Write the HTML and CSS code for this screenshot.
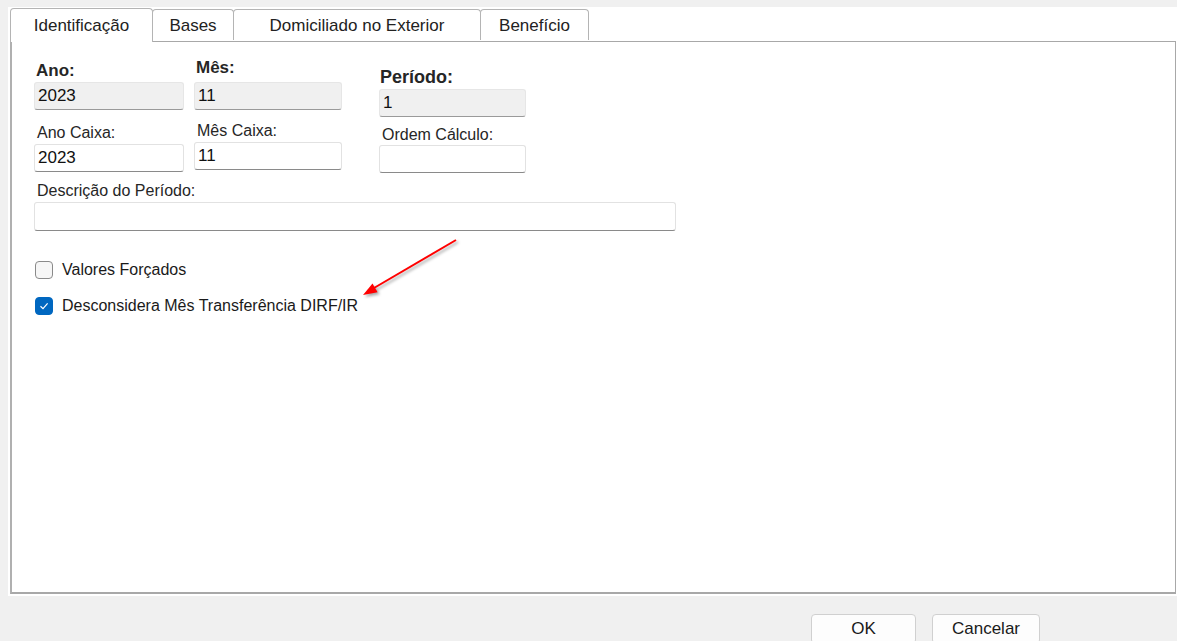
FILE: index.html
```html
<!DOCTYPE html>
<html lang="pt-BR">
<head>
  <meta charset="UTF-8">
  <title>Período</title>
  <link rel="stylesheet" href="styles.css">
</head>
<body>
  <div class="tab-control">
    <div class="tab-strip">
      <div class="tab tab-active tab-ident">Identificação</div>
      <div class="tab tab-bases">Bases</div>
      <div class="tab tab-dom">Domiciliado no Exterior</div>
      <div class="tab tab-benef">Benefício</div>
    </div>
    <div class="tab-page">
      <div class="top-grid">
        <div class="col col-ano">
          <div class="label bold">Ano:</div>
          <div class="box readonly gap-2">2023</div>
          <div class="label next-13">Ano Caixa:</div>
          <div class="box gap-2">2023</div>
        </div>
        <div class="col col-mes">
          <div class="label bold">Mês:</div>
          <div class="box readonly gap-5">11</div>
          <div class="label next-11">Mês Caixa:</div>
          <div class="box gap-1">11</div>
        </div>
        <div class="col col-periodo">
          <div class="label bold big">Período:</div>
          <div class="box readonly gap-3">1</div>
          <div class="label next-8">Ordem Cálculo:</div>
          <div class="box"></div>
        </div>
      </div>

      <div class="desc">
        <div class="label">Descrição do Período:</div>
        <div class="box box-wide"></div>
      </div>

      <div class="check-row first">
        <span class="checkbox"></span>
        <span>Valores Forçados</span>
      </div>
      <div class="check-row">
        <span class="checkbox checked">
          <svg width="12" height="12" viewBox="0 0 12 12"><path d="M2.5 6.3 L5 8.7 L9.6 3.4" fill="none" stroke="#fff" stroke-width="1.2"/></svg>
        </span>
        <span>Desconsidera Mês Transferência DIRF/IR</span>
      </div>

      <svg class="arrow" width="110" height="70" viewBox="0 0 110 70">
        <line x1="101" y1="5" x2="19" y2="53" stroke="#f00" stroke-width="2"/>
        <polygon points="8,60 22.6,57.2 17.5,48.6" fill="#f00"/>
      </svg>
    </div>
  </div>

  <div class="buttons">
    <button class="btn btn-ok">OK</button>
    <button class="btn btn-cancel">Cancelar</button>
  </div>
</body>
</html>
```

FILE: styles.css
```css
html, body {
  margin: 0;
  padding: 0;
  height: 100%;
  overflow: hidden;
}
body {
  background: #f0f0f0;
  font-family: "Liberation Sans", Arial, sans-serif;
  font-size: 16px;
  color: #1a1a1a;
}
.tab-control {
  margin: 7px 0 0 8px;
  padding: 0 1px 2px 2px;
  background: #fff;
  height: 589px;
  box-sizing: border-box;
  display: flex;
  flex-direction: column;
}
.tab-strip {
  display: flex;
  align-items: flex-end;
  height: 34px;
  position: relative;
  z-index: 1;
}
.tab {
  box-sizing: border-box;
  height: 31px;
  border: 1px solid #b4b4b4;
  border-bottom: none;
  border-radius: 4px 4px 0 0;
  background: #fff;
  margin-left: -1px;
  margin-bottom: 1px;
  padding-top: 2px;
  display: flex;
  align-items: center;
  justify-content: center;
  font-size: 17px;
  color: #222;
}
.tab-active {
  height: 34px;
  margin-left: 0;
  margin-bottom: -1px;
  padding-top: 0;
}
.tab-ident { width: 143px; }
.tab-bases { width: 82px; }
.tab-dom { width: 248px; }
.tab-benef { width: 109px; }

.tab-page {
  flex: 1;
  position: relative;
  border: 1px solid #a8a8a8;
  border-bottom: 2px solid #a8a8a8;
  border-left: 2px solid #b0b0b0;
  padding: 15px 0 0 22px;
}

.top-grid {
  display: flex;
  align-items: flex-start;
}
.col {
  display: flex;
  flex-direction: column;
}
.col-ano { width: 150px; margin-top: 4px; }
.col-mes { width: 148px; margin-left: 10px; margin-top: 1px; }
.col-periodo { width: 147px; margin-left: 37px; margin-top: 10px; }

.label {
  line-height: 20px;
  height: 20px;
  padding-left: 3px;
  color: #262626;
  white-space: nowrap;
}
.label.bold {
  font-weight: bold;
  font-size: 17px;
  padding-left: 2px;
}
.label.big { font-size: 18px; padding-left: 1px; }
.next-13 { margin-top: 13px; }
.next-11 { margin-top: 11px; }
.next-8 { margin-top: 8px; }
.gap-1 { margin-top: 1px; }
.gap-2 { margin-top: 1px; }
.gap-3 { margin-top: 2px; }
.gap-5 { margin-top: 4px; }

.box {
  box-sizing: border-box;
  height: 28px;
  line-height: 26px;
  padding-left: 3px;
  font-size: 17px;
  color: #111;
  background: #fff;
  border: 1px solid #e2e2e2;
  border-bottom: 1px solid #8a8a8a;
  border-radius: 3px;
}
.box.readonly {
  background: #f0f0f0;
  border-color: #e6e6e6;
  border-bottom-color: #9a9a9a;
}

.desc { margin-top: 8px; }
.box-wide {
  width: 642px;
  height: 29px;
  margin-top: 1px;
}

.check-row {
  display: flex;
  align-items: center;
  height: 20px;
  margin-top: 16px;
  margin-left: 1px;
  color: #1a1a1a;
}
.check-row.first { margin-top: 29px; }
.checkbox {
  box-sizing: border-box;
  width: 18px;
  height: 18px;
  border: 1px solid #8a8a8a;
  border-radius: 4px;
  background: #f6f6f6;
  margin-right: 9px;
  display: flex;
  align-items: center;
  justify-content: center;
}
.checkbox.checked {
  background: #0067c0;
  border-color: #0067c0;
}

.arrow {
  position: absolute;
  left: 343px;
  top: 193px;
  filter: drop-shadow(2px 2px 1.5px rgba(0, 0, 0, 0.35));
}

.buttons {
  display: flex;
  justify-content: flex-end;
  gap: 16px;
  padding: 18px 137px 0 0;
}
.btn {
  height: 30px;
  border: 1px solid #d0d0d0;
  border-radius: 4px;
  background: #fdfdfd;
  font-family: "Liberation Sans", Arial, sans-serif;
  font-size: 17px;
  color: #1a1a1a;
  padding: 0;
  padding-bottom: 1px;
}
.btn-ok { width: 105px; }
.btn-cancel { width: 108px; }
```
